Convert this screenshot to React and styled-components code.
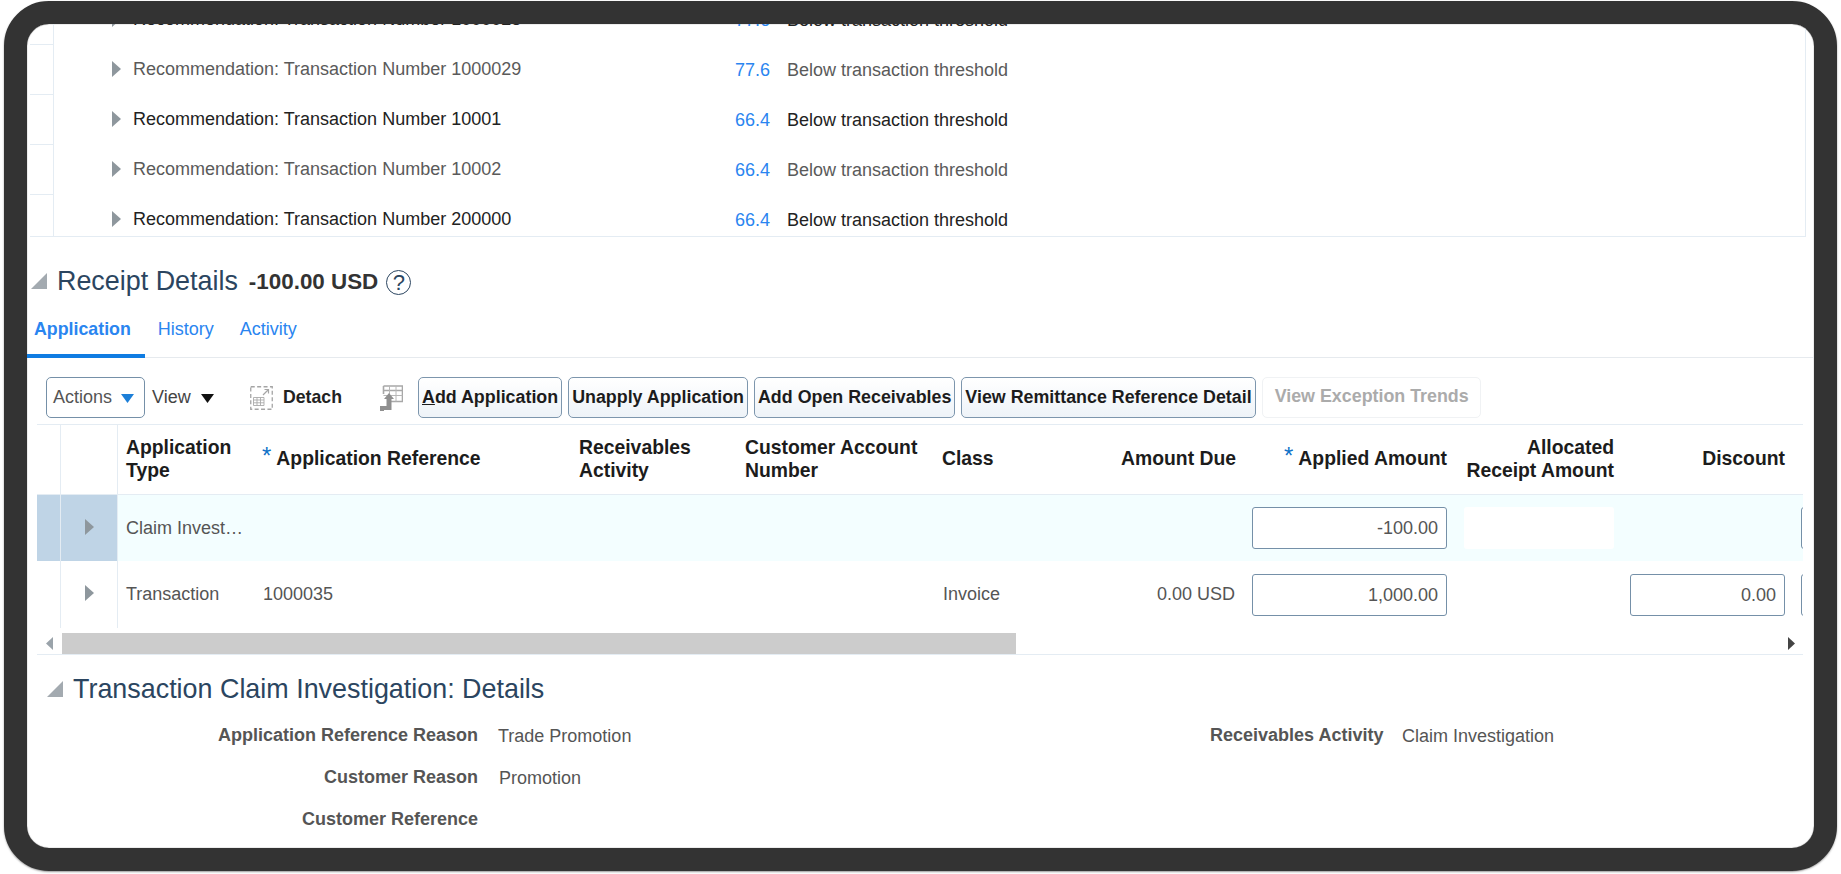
import React from 'react';
import styled, { createGlobalStyle } from 'styled-components';

const Global = createGlobalStyle`
  html, body { margin: 0; padding: 0; background: #fff; }
  body { font-family: "Liberation Sans", Arial, sans-serif; color: #555; width: 1841px; height: 874px; overflow: hidden; }
  * { box-sizing: border-box; }
`;

const Frame = styled.div`
  margin: 1px 0 0 4px;
  width: 1833px;
  height: 870px;
  border: 23px solid #333;
  border-radius: 45px;
  box-shadow: 0 1px 2px #999, inset 0 0 1px #444;
  background: #fff;
  overflow: hidden;
`;

const ResultsPanel = styled.div`
  margin-left: 3px;
  width: 1776px;
  height: 213px;
  border-right: 1px solid #e4ecf3;
  border-bottom: 1px solid #e4ecf3;
  overflow: hidden;
`;
const ResultsList = styled.div`
  margin-top: -29px;
`;
const ResultRow = styled.div`
  display: grid;
  grid-template-columns: 24px 58px 21px 587px 50px 1fr;
  height: 50px;
  align-items: center;
  font-size: 18px;
  color: ${p => (p.$dark ? '#222' : '#5a5a5a')};
`;
const GutterCell = styled.div`
  height: 50px;
  border-right: 1px solid #e4ecf3;
  border-bottom: 1px solid #e4ecf3;
`;
const Expander = styled.svg`
  display: block;
  width: 9px;
  height: 16px;
  margin-top: -3px;
  fill: #8e979d;
`;
const ResultName = styled.span`
  white-space: nowrap;
  line-height: 20px;
  padding-bottom: 2px;
`;
const Score = styled.span`
  text-align: right;
  color: #2a85f0;
  padding-top: 1px;
`;
const Reason = styled.span`
  padding: 1px 0 0 17px;
`;

const SectionHead = styled.div`
  display: flex;
  align-items: center;
  height: 68px;
  padding: 20px 0 0 4px;
`;
const Disclosure = styled.svg`
  display: block;
  width: 16px;
  height: 16px;
  fill: #a3aab0;
  margin-right: 10px;
`;
const Title = styled.h2`
  margin: 0;
  font-size: 26.9px;
  font-weight: 400;
  color: #2b4560;
  white-space: nowrap;
`;
const Total = styled.span`
  margin-left: 11px;
  font-size: 22.4px;
  font-weight: 700;
  color: #333;
  padding-top: 2px;
`;
const Help = styled.span`
  width: 25px;
  height: 25px;
  margin-left: 8px;
  margin-top: 2px;
  border-radius: 50%;
  border: 1.5px solid #2b4560;
  color: #2b4560;
  font-size: 22px;
  line-height: 23px;
  text-align: center;
`;

const Tabs = styled.div`
  display: flex;
  height: 53px;
  border-bottom: 1px solid #e6eaee;
`;
const Tab = styled.div`
  height: 53px;
  padding: 0 ${p => (p.$active ? '14px' : '13px')} 1px ${p => (p.$active ? '7px' : '13px')};
  display: flex;
  align-items: center;
  font-size: ${p => (p.$active ? '17.8px' : '18px')};
  font-weight: ${p => (p.$active ? 700 : 400)};
  color: #2a85f0;
  border-bottom: 4px solid ${p => (p.$active ? '#0f7ce2' : 'transparent')};
`;

const Toolbar = styled.div`
  display: flex;
  align-items: center;
  height: 41px;
  margin-top: 19px;
  padding-left: 19px;
`;
const ActionsMenu = styled.div`
  width: 99px;
  height: 41px;
  display: flex;
  align-items: center;
  justify-content: space-between;
  padding: 0 10px 0 6px;
  border: 1px solid #7590a8;
  border-radius: 5px;
  font-size: 18px;
  color: #555;
`;
const ViewMenu = styled.div`
  display: flex;
  align-items: center;
  margin-left: 7px;
  width: 98px;
  font-size: 18px;
  color: #444;
`;
const Caret = styled.svg`
  display: block;
  width: 13px;
  height: 9px;
  margin-left: ${p => p.$gap || 0}px;
  margin-top: 2px;
  fill: ${p => p.$color};
`;
const DetachButton = styled.div`
  display: flex;
  align-items: center;
  width: 130px;
  font-size: 17.7px;
  font-weight: 700;
  color: #222;
  svg { margin-right: 10px; }
`;
const ToolIcon = styled.svg`
  display: block;
  flex: none;
`;
const FreezeIcon = styled(ToolIcon)`
  margin-right: 15px;
`;
const ActionButton = styled.button`
  height: 41px;
  padding: 0 3px;
  margin-right: 6px;
  font: 700 17.85px "Liberation Sans", Arial, sans-serif;
  color: ${p => (p.disabled ? '#ababab' : '#1c1c1c')};
  white-space: nowrap;
  border: 1px solid ${p => (p.disabled ? '#f0f2f4' : '#7d96ad')};
  border-radius: 5px;
  background: ${p => (p.disabled ? '#fff' : 'linear-gradient(#fff, #eef3f8)')};
  ${p => p.disabled && 'padding: 0 11px 2px 12px;'}
`;

const cols = '24px 57px 136px 316px 167px 197px 98px 212px 211px 167px 171px 10px';

const GridWrap = styled.div`
  margin: 6px 0 0 10px;
  width: 1766px;
  border-top: 1px solid #e4ecf3;
  overflow: hidden;
`;
const HeadRow = styled.div`
  display: grid;
  grid-template-columns: ${cols};
  height: 70px;
  border-bottom: 1px solid #e4ecf3;
`;
const HeadCell = styled.div`
  display: flex;
  align-items: center;
  justify-content: ${p => (p.$right ? 'flex-end' : 'flex-start')};
  padding: 0 8px 2px ${p => p.$pad || 8}px;
  font-size: 19.35px;
  font-weight: 700;
  line-height: 23px;
  color: #1c1c1c;
  text-align: ${p => (p.$right ? 'right' : 'left')};
  white-space: nowrap;
`;
const BlankHead = styled.div`
  border-right: 1px solid #e4ecf3;
`;
const Star = styled.span`
  color: #0f72c8;
  font-weight: 400;
  font-size: 24px;
  margin-right: 5px;
  align-self: center;
  margin-top: -7px;
`;
const DataRow = styled.div`
  display: grid;
  grid-template-columns: ${cols};
  height: ${p => (p.$selected ? 66 : 67)}px;
  align-items: center;
  background: ${p => (p.$selected ? '#f3feff' : '#fff')};
`;
const SelCell = styled.div`
  height: 100%;
  display: flex;
  align-items: center;
  justify-content: center;
  border-right: 1px solid #e4ecf3;
  background: ${p => (p.$selected ? '#bfd4e6' : 'transparent')};
`;
const TextCell = styled.div`
  padding: 0 ${p => (p.$right ? '9px' : '8px')} 0 ${p => p.$pad || 8}px;
  font-size: 18px;
  color: #555;
  white-space: nowrap;
  overflow: hidden;
  text-overflow: ellipsis;
  text-align: ${p => (p.$right ? 'right' : 'left')};
`;
const InputCell = styled.div`
  padding: 0 8px;
  min-width: 0;
`;
const AmountInput = styled.div`
  height: 42px;
  width: ${p => p.$w || 'auto'};
  padding-right: 8px;
  line-height: 40px;
  text-align: right;
  font-size: 18px;
  color: #555;
  background: #fff;
  border: 1px solid #7590a8;
  border-radius: 3px;
`;
const ReadonlyBox = styled.div`
  height: 42px;
  width: 150px;
  margin-left: 1px;
  background: #fff;
  border-radius: 3px;
`;
const ScrollRow = styled.div`
  display: flex;
  align-items: center;
  height: 27px;
  padding-top: 5px;
  border-bottom: 1px solid #e4ecf3;
`;
const ScrollArrow = styled.svg`
  display: block;
  width: 7px;
  height: 13px;
  flex: none;
  fill: ${p => p.$color};
  margin-left: ${p => p.$left}px;
`;
const ScrollThumb = styled.div`
  width: 954px;
  height: 21px;
  margin-left: 9px;
  background: #ccc;
`;

const DetailHead = styled(SectionHead)`
  height: 58px;
  padding: 10px 0 0 20px;
`;
const Form = styled.div`
  display: grid;
  grid-template-columns: 451px 732px 172px 1fr;
  grid-auto-rows: 42px;
  align-items: center;
  margin-top: 1px;
`;
const Label = styled.div`
  font-size: 18px;
  font-weight: 700;
  color: #555;
  text-align: right;
  white-space: nowrap;
`;
const Value = styled.div`
  font-size: 18px;
  color: #555;
  white-space: nowrap;
  padding-left: ${p => p.$pad}px;
  padding-top: 2px;
`;

const Arrow = () => (
  <Expander viewBox="0 0 9 16"><path d="M0 0 L9 8 L0 16 Z" /></Expander>
);
const rows = [
  ['Recommendation: Transaction Number 1000028', '77.6', true],
  ['Recommendation: Transaction Number 1000029', '77.6', false],
  ['Recommendation: Transaction Number 10001', '66.4', true],
  ['Recommendation: Transaction Number 10002', '66.4', false],
  ['Recommendation: Transaction Number 200000', '66.4', true],
];
const CornerTri = () => (
  <Disclosure viewBox="0 0 16 16"><path d="M16 0 V16 H0 Z" /></Disclosure>
);

export default function App() {
  return (
    <>
      <Global />
      <Frame>
        <ResultsPanel>
          <ResultsList>
            {rows.map(([name, score, dark]) => (
              <ResultRow key={name} $dark={dark}>
                <GutterCell />
                <span />
                <Arrow />
                <ResultName>{name}</ResultName>
                <Score>{score}</Score>
                <Reason>Below transaction threshold</Reason>
              </ResultRow>
            ))}
          </ResultsList>
        </ResultsPanel>

        <SectionHead>
          <CornerTri />
          <Title>Receipt Details</Title>
          <Total>-100.00 USD</Total>
          <Help>?</Help>
        </SectionHead>

        <Tabs>
          <Tab $active>Application</Tab>
          <Tab>History</Tab>
          <Tab>Activity</Tab>
        </Tabs>

        <Toolbar>
          <ActionsMenu>
            Actions
            <Caret $color="#1c7fd8" viewBox="0 0 13 9"><path d="M0 0H13L6.5 9Z" /></Caret>
          </ActionsMenu>
          <ViewMenu>
            View
            <Caret $gap={10} $color="#111" viewBox="0 0 13 9"><path d="M0 0H13L6.5 9Z" /></Caret>
          </ViewMenu>
          <DetachButton>
            <ToolIcon width="23" height="24" viewBox="0 0 23 24" fill="none">
              <rect x="0.75" y="0.75" width="21.5" height="22.5" stroke="#a5a5a5" strokeWidth="1.3" strokeDasharray="4 2.4" />
              <path d="M13 9 L18.5 3.5 M14.5 3.5 H18.5 V7.5" stroke="#a5a5a5" strokeWidth="1.2" />
              <path d="M3.5 11.5 H14 V19.5 H3.5 Z M3.5 14 H14 M3.5 16.8 H14 M7 11.5 V19.5 M10.5 11.5 V19.5" stroke="#aaa" strokeWidth="0.9" />
            </ToolIcon>
            Detach
          </DetachButton>
          <FreezeIcon width="23" height="26" viewBox="0 0 23 26" fill="none">
            <path d="M3.5 1 H22.5 V16.5 H10 M3.5 1 V9 M3.5 5.5 H22.5" stroke="#a8a8a8" strokeWidth="1.6" />
            <path d="M3.5 10.5 H22.5 M9.5 1 V16.5 M16 1 V16.5" stroke="#b8b8b8" strokeWidth="1" />
            <path d="M0 26 V21 H6.5 V14 H4 L9 8 L14 14 H11.5 V25 H4 V26 Z" fill="#8f8f8f" />
          </FreezeIcon>
          <ActionButton><u>A</u>dd Application</ActionButton>
          <ActionButton>Unapply Application</ActionButton>
          <ActionButton>Add Open Receivables</ActionButton>
          <ActionButton>View Remittance Reference Detail</ActionButton>
          <ActionButton disabled>View Exception Trends</ActionButton>
        </Toolbar>

        <GridWrap>
          <HeadRow>
            <BlankHead />
            <BlankHead />
            <HeadCell>Application<br />Type</HeadCell>
            <HeadCell><Star>*</Star>Application Reference</HeadCell>
            <HeadCell $pad={9}>Receivables<br />Activity</HeadCell>
            <HeadCell>Customer Account<br />Number</HeadCell>
            <HeadCell>Class</HeadCell>
            <HeadCell $right>Amount Due</HeadCell>
            <HeadCell $right><Star>*</Star>Applied Amount</HeadCell>
            <HeadCell $right>Allocated<br />Receipt Amount</HeadCell>
            <HeadCell $right>Discount</HeadCell>
            <HeadCell />
          </HeadRow>

          <DataRow $selected>
            <SelCell $selected />
            <SelCell $selected><Arrow /></SelCell>
            <TextCell>Claim Investigation</TextCell>
            <span /><span /><span /><span /><span />
            <InputCell><AmountInput>-100.00</AmountInput></InputCell>
            <InputCell><ReadonlyBox /></InputCell>
            <span />
            <InputCell><AmountInput $w="20px" /></InputCell>
          </DataRow>

          <DataRow>
            <SelCell />
            <SelCell><Arrow /></SelCell>
            <TextCell>Transaction</TextCell>
            <TextCell $pad={9}>1000035</TextCell>
            <span />
            <span />
            <TextCell $pad={9}>Invoice</TextCell>
            <TextCell $right>0.00 USD</TextCell>
            <InputCell><AmountInput>1,000.00</AmountInput></InputCell>
            <span />
            <InputCell><AmountInput>0.00</AmountInput></InputCell>
            <InputCell><AmountInput $w="20px" /></InputCell>
          </DataRow>

          <ScrollRow>
            <ScrollArrow $left={9} $color="#9aa3aa" viewBox="0 0 7 13"><path d="M7 0V13L0 6.5Z" /></ScrollArrow>
            <ScrollThumb />
            <ScrollArrow $left={772} $color="#444" viewBox="0 0 7 13"><path d="M0 0V13L7 6.5Z" /></ScrollArrow>
          </ScrollRow>
        </GridWrap>

        <DetailHead>
          <CornerTri />
          <Title>Transaction Claim Investigation: Details</Title>
        </DetailHead>

        <Form>
          <Label>Application Reference Reason</Label>
          <Value $pad={20}>Trade Promotion</Value>
          <Label>Receivables Activity</Label>
          <Value $pad={20}>Claim Investigation</Value>
          <Label>Customer Reason</Label>
          <Value $pad={21}>Promotion</Value>
          <span /><span />
          <Label>Customer Reference</Label>
        </Form>
      </Frame>
    </>
  );
}
